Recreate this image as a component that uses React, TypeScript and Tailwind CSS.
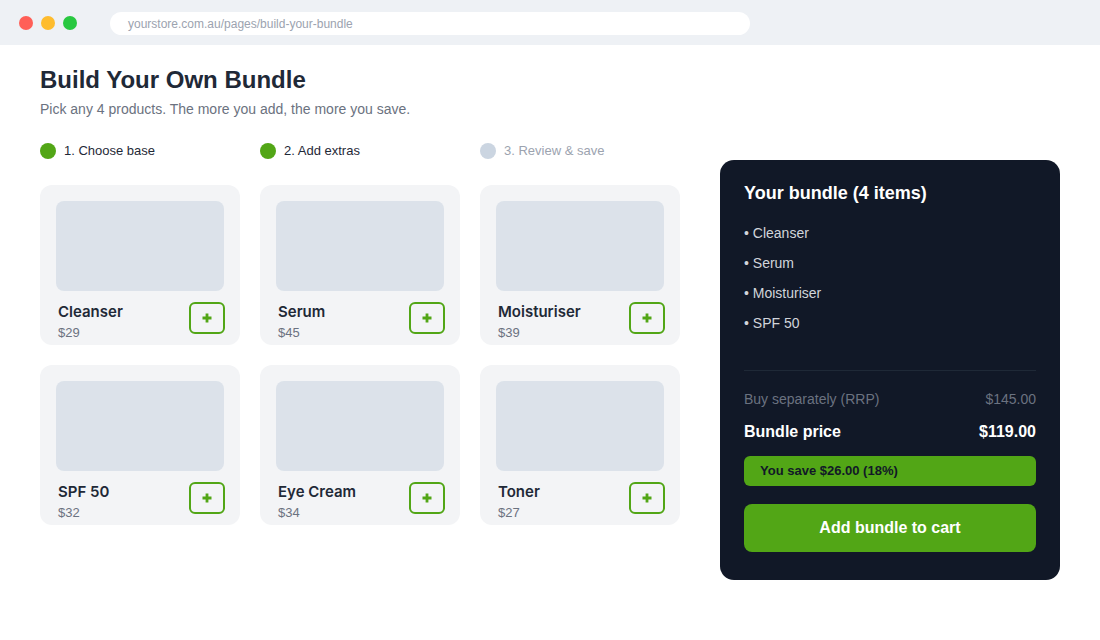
import React from "react";

const products = [
  { name: "Cleanser", price: "$29" },
  { name: "Serum", price: "$45" },
  { name: "Moisturiser", price: "$39" },
  { name: "SPF 50", price: "$32" },
  { name: "Eye Cream", price: "$34" },
  { name: "Toner", price: "$27" },
];

const steps = [
  { label: "1. Choose base", done: true },
  { label: "2. Add extras", done: true },
  { label: "3. Review & save", done: false },
];

function Plus() {
  return (
    <svg width="10" height="10" viewBox="0 0 10 10">
      <path d="M5 0.5v9M0.5 5h9" stroke="#52a616" strokeWidth="2.8" strokeLinecap="butt" />
    </svg>
  );
}

export default function App() {
  return (
    <div className="w-[1100px] h-[640px] bg-white overflow-hidden" style={{ fontFamily: '"Liberation Sans", Arial, sans-serif' }}>
      {/* browser bar */}
      <div className="h-[45px] bg-[#eef1f5] flex items-start">
        <div className="flex items-center gap-2 pl-[19px] pt-4">
          <span className="w-[14px] h-[14px] rounded-full bg-[#ff5f57]" />
          <span className="w-[14px] h-[14px] rounded-full bg-[#febc2e]" />
          <span className="w-[14px] h-[14px] rounded-full bg-[#28c840]" />
        </div>
        <div className="mt-3 ml-[33px] w-[640px] h-[23px] bg-white rounded-full flex items-center pl-[18px] text-[12px] text-[#9ca3af]">
          yourstore.com.au/pages/build-your-bundle
        </div>
      </div>

      <div className="flex px-10 pt-[19px] gap-10">
        <div className="w-[640px]">
          <h1 className="text-[24px] leading-[32px] font-bold text-[#1f2937]">Build Your Own Bundle</h1>
          <p className="mt-[3px] text-[14px] leading-[20px] text-[#6b7280]">
            Pick any 4 products. The more you add, the more you save.
          </p>
          <div className="mt-[22px] grid grid-cols-3 gap-5">
            {steps.map((s) => (
              <div key={s.label} className="flex items-center gap-2 h-5">
                <span className={`w-4 h-4 rounded-full ${s.done ? "bg-[#52a616]" : "bg-[#cbd5e1]"}`} />
                <span className={`text-[13px] ${s.done ? "text-[#1f2937]" : "text-[#9ca3af]"}`}>{s.label}</span>
              </div>
            ))}
          </div>
          <div className="mt-6 grid grid-cols-3 gap-x-5 gap-y-5 w-[640px]">
            {products.map((p) => (
              <div key={p.name} className="h-[160px] bg-[#f3f4f6] rounded-xl p-4 pb-1">
                <div className="h-[90px] bg-[#dce2ea] rounded-lg" />
                <div className="mt-[10px] flex items-start justify-between">
                  <div className="pl-0.5 pt-px">
                    <div className="text-[15px] leading-[20px] font-semibold text-[#1f2937]" style={{ fontFamily: "Inter, sans-serif" }}>
                      {p.name}
                    </div>
                    <div className="mt-0.5 text-[13px] leading-[18px] text-[#6b7280]">{p.price}</div>
                  </div>
                  <button className="mt-px mr-[-1px] w-9 h-8 rounded-md border-2 border-[#52a616] flex items-center justify-center bg-transparent">
                    <Plus />
                  </button>
                </div>
              </div>
            ))}
          </div>
        </div>

        <div className="mt-[96px] w-[340px] h-[420px] bg-[#111827] rounded-[14px] px-6 pt-[22px]">
          <h2 className="text-[18px] leading-[22px] font-bold text-white">Your bundle (4 items)</h2>
          <ul className="mt-[14px]">
            {["Cleanser", "Serum", "Moisturiser", "SPF 50"].map((n) => (
              <li key={n} className="h-[30px] flex items-center text-[14px] text-[#d1d5db]">
                • {n}
              </li>
            ))}
          </ul>
          <div className="mt-[32px] h-px bg-[#1f2937]" />
          <div className="mt-[18px] h-5 flex items-center justify-between text-[14px] text-[#6b7280]">
            <span>Buy separately (RRP)</span>
            <span>$145.00</span>
          </div>
          <div className="mt-[11px] h-6 flex items-center justify-between text-[16px] font-bold text-white">
            <span>Bundle price</span>
            <span>$119.00</span>
          </div>
          <div className="mt-3 h-[30px] rounded-md bg-[#52a616] flex items-center pl-4 text-[13px] font-bold text-[#111827]">
            You save $26.00 (18%)
          </div>
          <button className="mt-[18px] w-full h-12 rounded-lg bg-[#52a616] text-white text-[16px] font-bold flex items-center justify-center">
            Add bundle to cart
          </button>
        </div>
      </div>
    </div>
  );
}
